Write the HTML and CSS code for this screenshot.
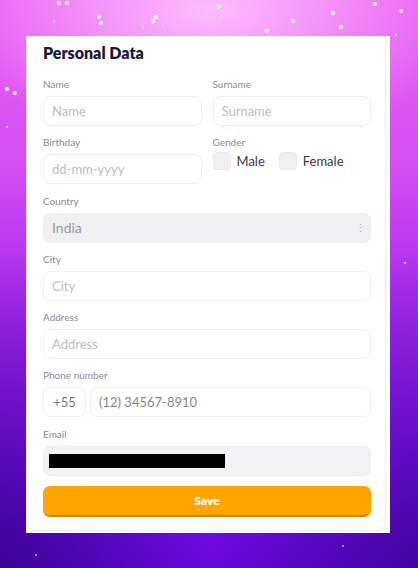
FILE: index.html
```html
<!DOCTYPE html>
<html lang="en">
<head>
    <meta charset="UTF-8">
    <meta name="viewport" content="width=device-width, initial-scale=1.0">
    <title>Personal Data</title>
    <link rel="stylesheet" href="styles.css">
</head>
<body>
<div class="stars"></div>
<div class="card">
    <div class="inner">
        <h1>Personal Data</h1>

        <div class="row">
            <div class="field">
                <label for="name">Name</label>
                <input type="text" id="name" placeholder="Name">
            </div>
            <div class="field">
                <label for="surname">Surname</label>
                <input type="text" id="surname" placeholder="Surname">
            </div>
        </div>

        <div class="row">
            <div class="field">
                <label for="birthday">Birthday</label>
                <input type="text" id="birthday" placeholder="dd-mm-yyyy">
            </div>
            <div class="field">
                <label>Gender</label>
                <div class="gender">
                    <span class="check"></span><span class="opt">Male</span>
                    <span class="check"></span><span class="opt">Female</span>
                </div>
            </div>
        </div>

        <div class="field">
            <label>Country</label>
            <div class="select">
                <span>India</span>
                <span class="dots">&#8942;</span>
            </div>
        </div>

        <div class="field">
            <label for="city">City</label>
            <input type="text" id="city" placeholder="City">
        </div>

        <div class="field">
            <label for="address">Address</label>
            <input type="text" id="address" placeholder="Address">
        </div>

        <div class="field">
            <label for="phone">Phone number</label>
            <div class="phone">
                <div class="code">+55</div>
                <input type="text" id="phone" placeholder="(12) 34567-8910">
            </div>
        </div>

        <div class="field">
            <label>Email</label>
            <div class="email"><span class="hidden"></span></div>
        </div>

        <button>Save</button>
    </div>
</div>
</body>
</html>
```

FILE: styles.css
```css
html, body {
    margin: 0;
    height: 568px;
    overflow: hidden;
}
body {
    font-family: Lato, "Noto Sans", sans-serif;
    background:
        radial-gradient(ellipse 260px 140px at 210px 10px, rgba(255, 200, 255, 0.9), rgba(255, 200, 255, 0) 100%),
        radial-gradient(ellipse 220px 320px at 0px 568px, rgba(40, 0, 120, 0.7), rgba(40, 0, 120, 0) 100%),
        radial-gradient(ellipse 220px 320px at 418px 568px, rgba(40, 0, 120, 0.6), rgba(40, 0, 120, 0) 100%),
        linear-gradient(180deg, #ea5cf2 0%, #d64ff2 28%, #a628f0 56%, #8412f2 80%, #6a08e0 100%);
    padding-top: 36px;
    box-sizing: border-box;
}
.stars {
    position: absolute;
    left: 0;
    top: 0;
    width: 2px;
    height: 2px;
    border-radius: 50%;
    background: transparent;
    box-shadow:
        58px 2px 0 1px #fff, 66px 2px 0 1px #fff, 98px 16px 0 1px #fff, 100px 22px 0 1px #fff,
        142px 26px 0 0 #fff, 152px 20px 0 1px #fff, 155px 16px 0 1px #fff, 162px 25px 0 0 #fff,
        218px 6px 0 1px #fff, 218px 20px 0 0 #fff, 266px 30px 0 1px #fff, 292px 20px 0 1px #fff,
        332px 12px 0 1px #fff, 340px 26px 0 1px #fff, 374px 3px 0 1px #fff, 400px 10px 0 1px #fff,
        6px 88px 0 1px #fff, 14px 92px 0 1px #fff, 53px 20px 0 0 #fff, 395px 34px 0 0 #fff,
        6px 126px 0 0 #fff, 404px 262px 0 0 #fff, 35px 154px 0 0 rgba(255,255,255,.6),
        35px 554px 0 0 rgba(230,180,255,.9), 342px 545px 0 0 rgba(230,180,255,.9);
}
.card {
    width: 364px;
    margin-left: 26px;
    background: #fff;
    padding: 0 4px 2px 0;
    box-sizing: border-box;
}
.inner {
    border: 1px solid #efeef3;
    border-top: none;
    border-radius: 0 0 8px 8px;
    padding: 7px 14px 13px 16px;
}
h1 {
    font-size: 16px;
    font-weight: 800;
    line-height: 20px;
    color: #1b1b38;
    margin: 0 0 14px 0;
}
.row {
    display: flex;
    gap: 11px;
}
.row .field {
    flex: 1;
}
.field {
    margin-bottom: 9.3px;
}
label {
    display: block;
    font-size: 10px;
    line-height: 14px;
    color: #8a8a96;
    margin-bottom: 5px;
}
input[type="text"] {
    width: 100%;
    height: 30px;
    box-sizing: border-box;
    border: 1.5px solid #f0eff4;
    border-radius: 7px;
    padding: 0 8px;
    font-family: inherit;
    font-size: 13px;
    color: #888;
    outline: none;
}
input::placeholder {
    color: #bdbdc4;
}
.gender {
    display: flex;
    align-items: center;
    height: 18px;
    margin-top: -2px;
}
.check {
    width: 18px;
    height: 18px;
    box-sizing: border-box;
    border-radius: 4px;
    background: #f0f0f4;
    border: 1px solid #e8e8ee;
}
.opt {
    font-size: 13px;
    color: #3a3a4a;
    margin: 0 14px 0 6px;
}
.select {
    height: 30px;
    border-radius: 7px;
    background: #f0f0f2;
    border: 1.5px solid #ececef;
    box-sizing: border-box;
    display: flex;
    align-items: center;
    justify-content: space-between;
    padding: 0 4px 0 8px;
    font-size: 14px;
    color: #9a9aa2;
}
.dots {
    font-size: 11px;
    color: #aaa;
}
.phone {
    display: flex;
    gap: 4px;
}
.code {
    width: 43px;
    flex: none;
    height: 30px;
    box-sizing: border-box;
    border: 1.5px solid #f0eff4;
    border-radius: 7px;
    display: flex;
    align-items: center;
    justify-content: center;
    font-size: 13px;
    color: #777;
}
.phone input[type="text"] {
    flex: 1;
}
.phone input::placeholder {
    color: #888;
}
.email {
    height: 30px;
    border-radius: 7px;
    background: #f3f2f5;
    border: 1.5px solid #ececf0;
    box-sizing: border-box;
    display: flex;
    align-items: center;
    padding-left: 5px;
}
.hidden {
    width: 176px;
    height: 14px;
    background: #000;
}
button {
    display: block;
    width: 100%;
    height: 31px;
    margin-top: 10px;
    border: none;
    border-bottom: 2px solid #d08a00;
    border-radius: 7px;
    background: #ffa502;
    color: #fff;
    font-family: inherit;
    font-size: 12px;
    font-weight: 800;
    cursor: pointer;
}
```
